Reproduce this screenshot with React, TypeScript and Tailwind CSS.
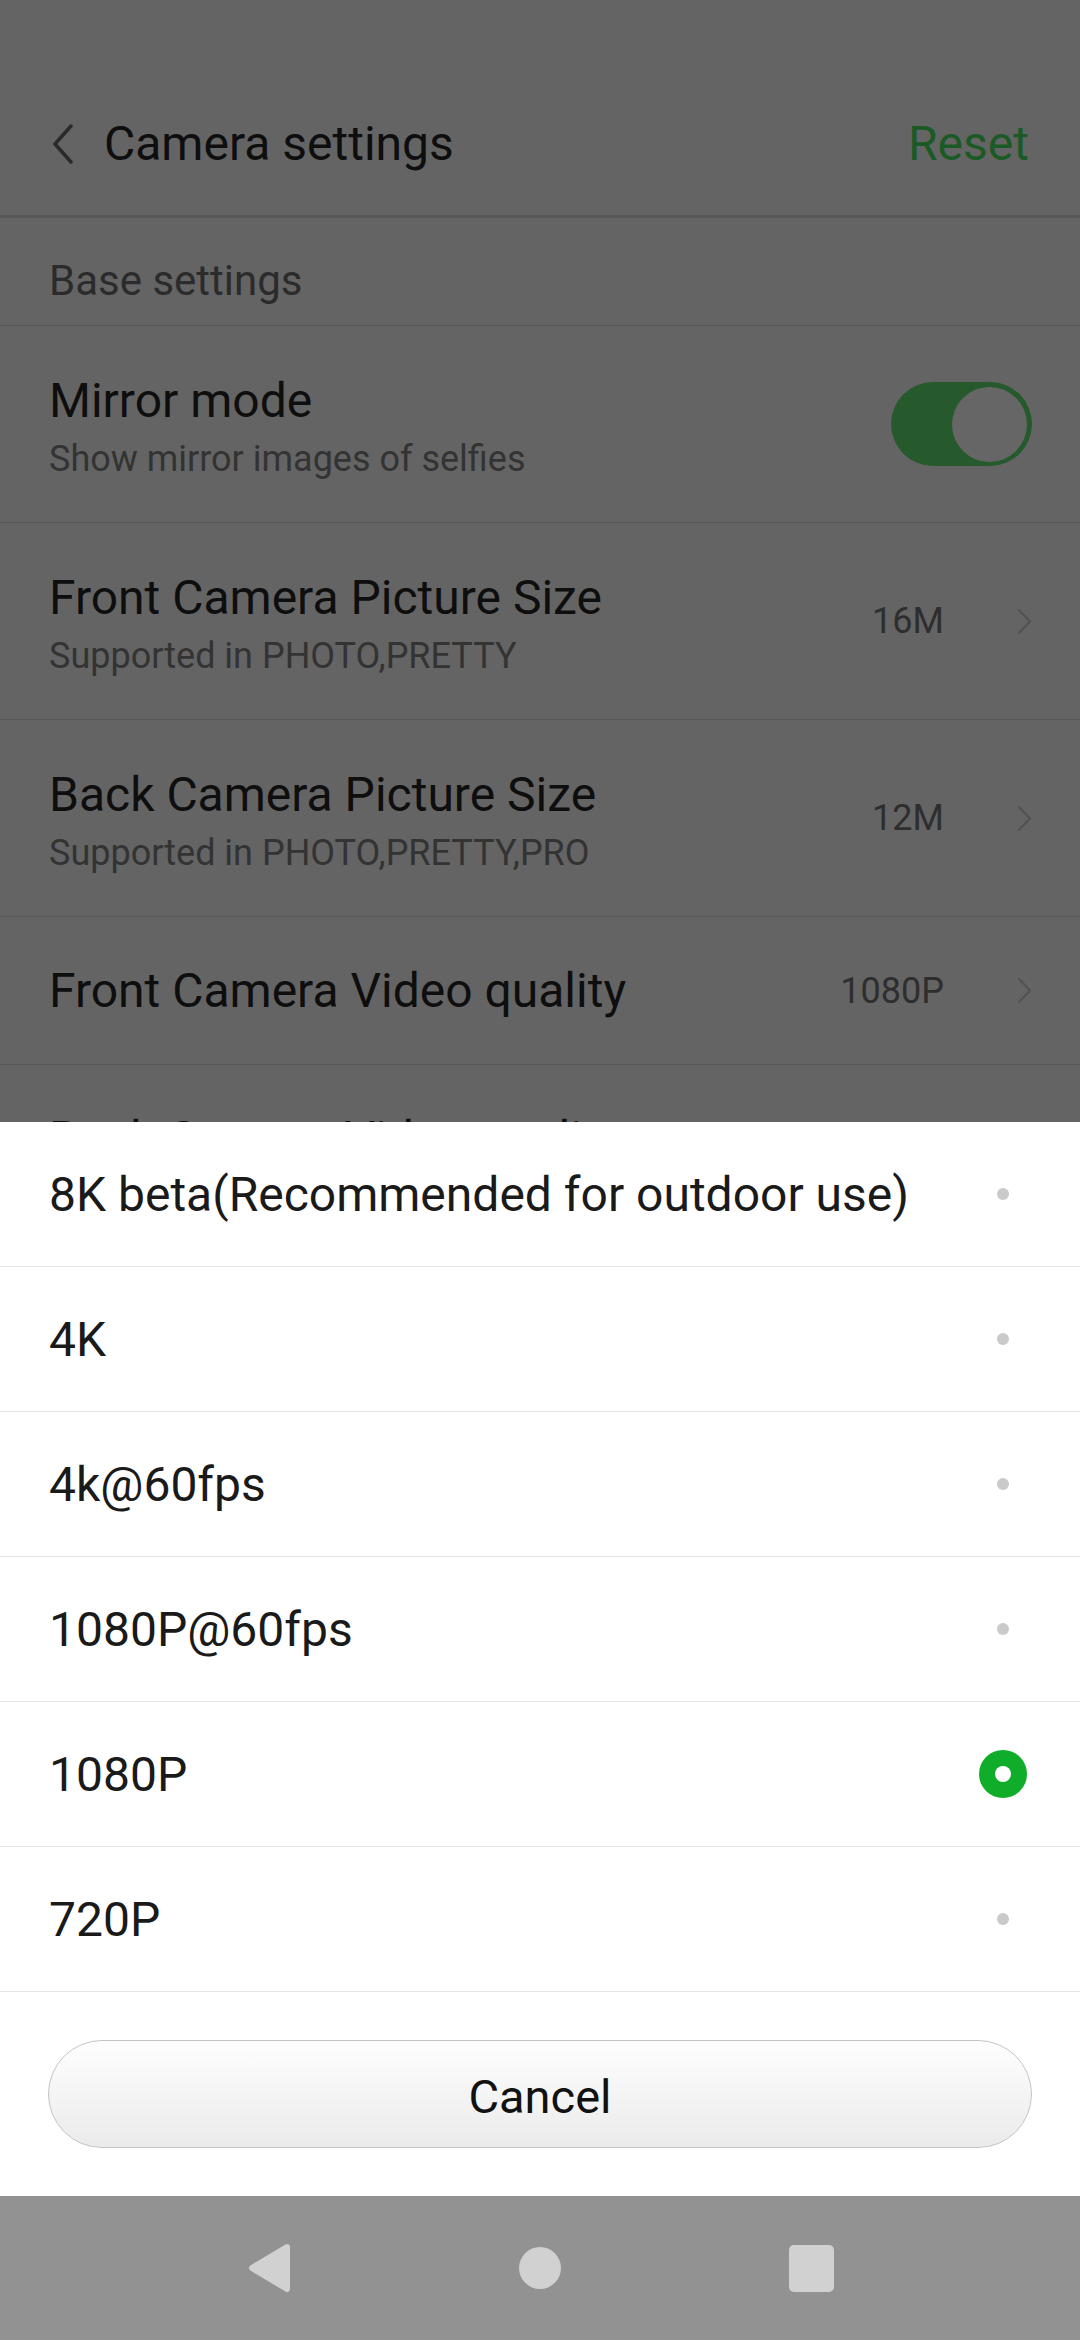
import React from 'react'

const FONT = { fontFamily: 'Roboto, "Noto Sans", sans-serif' }

interface SettingRowProps {
  title: string
  subtitle?: string
  value?: string
  tall?: boolean
}

function Chevron() {
  return (
    <svg width="15" height="27" viewBox="0 0 15 27" fill="none">
      <path d="M2 2 L13 13.5 L2 25" stroke="#525252" strokeWidth="2" strokeLinecap="round" strokeLinejoin="round" />
    </svg>
  )
}

function SettingRow({ title, subtitle, value, tall }: SettingRowProps) {
  return (
    <div
      className={`flex items-center justify-between pl-[49px] pr-[48px] border-b border-[#585858] ${
        tall ? 'h-[197px]' : 'h-[148px]'
      }`}
    >
      <div className={`flex flex-col gap-[8px] ${tall ? 'pt-[6px]' : ''}`}>
        <span className="text-[48px] leading-[56px] text-[#0e0e0e]">{title}</span>
        {subtitle && <span className="text-[36px] leading-[44px] text-[#333333]">{subtitle}</span>}
      </div>
      {value && (
        <div className="flex items-center gap-[73px]">
          <span className="text-[36px] leading-[44px] text-[#2e2e2e]">{value}</span>
          <Chevron />
        </div>
      )}
    </div>
  )
}

const options = [
  '8K beta(Recommended for outdoor use)',
  '4K',
  '4k@60fps',
  '1080P@60fps',
  '1080P',
  '720P',
]

function Radio({ selected }: { selected: boolean }) {
  return (
    <div className="w-[48px] h-[48px] flex items-center justify-center">
      {selected ? (
        <div className="w-[48px] h-[48px] rounded-full bg-[#10ad2b] flex items-center justify-center">
          <div className="w-[16px] h-[16px] rounded-full bg-white" />
        </div>
      ) : (
        <div className="w-[12px] h-[12px] rounded-full bg-[#cacaca]" />
      )}
    </div>
  )
}

export default function App() {
  const selected = '1080P'

  return (
    <div className="w-[1080px] h-[2340px] flex flex-col overflow-hidden" style={FONT}>
      {/* Dimmed settings page behind the sheet */}
      <div className="h-[1122px] overflow-hidden bg-[#646464] shrink-0">
        {/* Header */}
        <div className="h-[215px] pt-[72px] flex items-center justify-between pl-[52px] pr-[51px]">
          <div className="flex items-center gap-[30px]">
            <svg width="22" height="40" viewBox="0 0 22 40" fill="none">
              <path d="M19 2 L3 20 L19 38" stroke="#2a2a2a" strokeWidth="3.5" strokeLinecap="round" strokeLinejoin="round" />
            </svg>
            <span className="text-[48px] leading-[56px] text-[#0e0e0e]">Camera settings</span>
          </div>
          <span className="text-[48px] leading-[56px] text-[#1b5a25]">Reset</span>
        </div>
        <div className="h-[3px] bg-[#575757]" />

        {/* Section label */}
        <div className="h-[108px] pt-[19px] flex items-center pl-[49px] border-b border-[#585858]">
          <span className="text-[42px] leading-[50px] text-[#2b2b2b]">Base settings</span>
        </div>

        {/* Mirror mode */}
        <div className="h-[197px] flex items-center justify-between pl-[49px] pr-[48px] border-b border-[#585858]">
          <div className="flex flex-col gap-[8px] pt-[6px]">
            <span className="text-[48px] leading-[56px] text-[#0e0e0e]">Mirror mode</span>
            <span className="text-[36px] leading-[44px] text-[#333333]">Show mirror images of selfies</span>
          </div>
          <div className="w-[141px] h-[84px] rounded-full bg-[#265a2d] flex items-center justify-end pr-[5px]">
            <div className="w-[75px] h-[75px] rounded-full bg-[#666666]" />
          </div>
        </div>

        <SettingRow title="Front Camera Picture Size" subtitle="Supported in PHOTO,PRETTY" value="16M" tall />
        <SettingRow title="Back Camera Picture Size" subtitle="Supported in PHOTO,PRETTY,PRO" value="12M" tall />
        <SettingRow title="Front Camera Video quality" value="1080P" />
        <SettingRow title="Back Camera Video quality" value="4K" />
      </div>

      {/* Bottom sheet */}
      <div className="bg-white flex flex-col shrink-0">
        {options.map((opt) => (
          <div
            key={opt}
            className="h-[145px] flex items-center justify-between pl-[49px] pr-[53px] border-b border-[#e6e6e6]"
          >
            <span className="text-[48px] leading-[56px] text-[#1a1a1a] pt-[2px]">{opt}</span>
            <Radio selected={opt === selected} />
          </div>
        ))}
        <div className="px-[48px] py-[48px]">
          <button className="w-full h-[108px] rounded-full border border-[#c4c4c4] bg-gradient-to-b from-[#fefefe] to-[#ebebeb] flex items-center justify-center">
            <span className="text-[47px] leading-[56px] text-[#111111] pt-[5px]" style={FONT}>Cancel</span>
          </button>
        </div>
      </div>

      {/* Navigation bar */}
      <div className="h-[144px] bg-[#929292] flex items-center justify-center gap-[228px] shrink-0">
        <svg width="44" height="50" viewBox="0 0 44 50">
          <path d="M40 4 L5 25 L40 46 Z" fill="#d1d1d1" stroke="#d1d1d1" strokeWidth="6" strokeLinejoin="round" />
        </svg>
        <div className="w-[42px] h-[42px] rounded-full bg-[#d1d1d1]" />
        <div className="w-[45px] h-[47px] rounded-[5px] bg-[#d1d1d1]" />
      </div>
    </div>
  )
}
